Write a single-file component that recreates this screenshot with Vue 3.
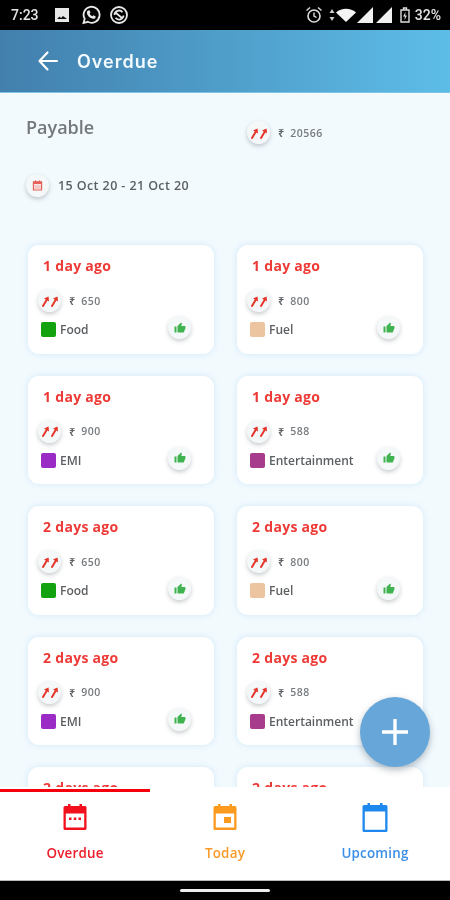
<script setup>
const cards = [
  { when: '1 day ago', amount: 650, label: 'Food', color: '#12a10f' },
  { when: '1 day ago', amount: 800, label: 'Fuel', color: '#ecc4a0' },
  { when: '1 day ago', amount: 900, label: 'EMI', color: '#9a2bc4' },
  { when: '1 day ago', amount: 588, label: 'Entertainment', color: '#a83c8c' },
  { when: '2 days ago', amount: 650, label: 'Food', color: '#12a10f' },
  { when: '2 days ago', amount: 800, label: 'Fuel', color: '#ecc4a0' },
  { when: '2 days ago', amount: 900, label: 'EMI', color: '#9a2bc4' },
  { when: '2 days ago', amount: 588, label: 'Entertainment', color: '#a83c8c' },
  { when: '2 days ago', amount: 650, label: 'Food', color: '#12a10f' },
  { when: '2 days ago', amount: 800, label: 'Fuel', color: '#ecc4a0' }
]
</script>

<template>
  <div class="phone">
    <div class="status">
      <div class="status-left">
        <span class="time">7:23</span>
        <svg class="st-img" viewBox="0 0 16 16"><path fill="#e8e8e8" d="M1 1h14v14H1z"/><path fill="#111" d="M3 12l2.500-2.500L7 11l2-2 4 3z"/></svg>
        <svg class="st-wa" viewBox="0 0 20 20"><path fill="none" stroke="#e8e8e8" stroke-width="1.800" d="M2.500 18l1.200-4.200A8 8 0 1 1 6.800 16.800z"/><path fill="#e8e8e8" d="M7 5.500l1.500-.3 1 2.400-.9 1.100c.6 1.100 1.500 2 2.700 2.600l1.100-1 2.300 1.100-.3 1.600c-.5.700-1.500 1-2.500.8-3.300-.8-5.500-3-6-5.800C5.800 6.900 6.200 6 7 5.500z"/></svg>
        <svg class="st-sw" viewBox="0 0 20 20"><circle cx="10" cy="10" r="8" fill="none" stroke="#e8e8e8" stroke-width="1.800"/><path fill="none" stroke="#e8e8e8" stroke-width="1.800" d="M5.500 10a4.500 4.500 0 0 1 8-2.800M14.500 10.500a4.500 4.500 0 0 1-8 2.300M7 8l6 5"/></svg>
      </div>
      <div class="status-right">
        <svg class="st-alarm" viewBox="0 0 18 18"><circle cx="9" cy="10" r="6" fill="none" stroke="#ddd" stroke-width="1.600"/><path fill="none" stroke="#ddd" stroke-width="1.400" d="M9 6.500V10l2.500 1.500M1.500 4.500L5 1.500M16.500 4.500L13 1.500"/></svg>
        <svg class="st-data" viewBox="0 0 6 14"><path fill="#ccc" d="M3 1l2.500 4h-5zM3 13L.5 9h5z"/></svg>
        <svg class="st-wifi" viewBox="0 0 20 14"><path fill="#f4f4f4" d="M0 4.500C5.500-.5 14.500-.5 20 4.500L10 14z"/></svg>
        <svg class="st-sig" viewBox="0 0 16 16"><path fill="#f0f0f0" d="M16 0v16H0z"/></svg>
        <svg class="st-sig" viewBox="0 0 16 16"><path fill="#f0f0f0" d="M16 0v16H0z"/></svg>
        <svg class="st-bat" viewBox="0 0 10 16"><path fill="none" stroke="#ddd" stroke-width="1.400" d="M1 3h8v12H1zM3.500 3V1h3v2"/><path fill="#ddd" d="M5.500 5L3 9.500h1.800L4.500 13 7 8.500H5.200z"/></svg>
        <span class="pct">32%</span>
      </div>
    </div>

    <header class="bar">
      <svg class="back" viewBox="0 0 22 22"><path fill="none" stroke="#fff" stroke-width="2.200" stroke-linecap="round" stroke-linejoin="round" d="M20 11H2.500M10.500 2.500L2.500 11l8 8.500"/></svg>
      <h1>Overdue</h1>
    </header>

    <main class="scroll">
      <section class="summary">
        <div class="payable">Payable</div>
        <div class="total">
          <span class="bubble">
            <svg viewBox="0 0 18 12" class="arrows"><path d="M2 11L6.500 3.500M11 11L15.500 3.500" stroke="#e5362c" stroke-width="2" fill="none" stroke-linecap="round"/><path d="M3 3.500L7.500 1.500 8 6.500zM12 3.500L16.500 1.500 17 6.500z" fill="#e5362c"/></svg>
          </span>
          <span class="rupee">₹</span><span class="total-num">20566</span>
        </div>
        <div class="dates">
          <span class="bubble">
            <svg viewBox="0 0 16 16" class="cal-small"><path fill="none" stroke="#e8605a" stroke-width="1.500" d="M3 3.500h10v10H3z"/><path fill="#e8605a" d="M3 3h10v3H3zM5 1.500h1V4H5zM10 1.500h1V4h-1z"/><path fill="#f6c9c6" d="M4 7h8v6H4z"/></svg>
          </span>
          <span class="date-text">15 Oct 20 - 21 Oct 20</span>
        </div>
      </section>

      <section class="grid">
        <article v-for="(c, i) in cards" :key="i" class="card">
          <div class="when">{{ c.when }}</div>
          <div class="amount">
            <span class="bubble">
              <svg viewBox="0 0 18 12" class="arrows"><path d="M2 11L6.500 3.500M11 11L15.500 3.500" stroke="#e5362c" stroke-width="2" fill="none" stroke-linecap="round"/><path d="M3 3.500L7.500 1.500 8 6.500zM12 3.500L16.500 1.500 17 6.500z" fill="#e5362c"/></svg>
            </span>
            <span class="rupee">₹</span><span class="num">{{ c.amount }}</span>
          </div>
          <div class="foot">
            <span class="swatch" :style="{ background: c.color }"></span>
            <span class="label">{{ c.label }}</span>
            <span class="bubble thumb">
              <svg viewBox="0 0 24 24"><path fill="#3fb34f" d="M1 21h4V9H1v12zm22-11c0-1.100-.9-2-2-2h-6.310l.95-4.570.03-.32c0-.41-.17-.79-.44-1.060L14.170 1 7.590 7.590C7.220 7.950 7 8.450 7 9v10c0 1.100.9 2 2 2h9c.83 0 1.540-.5 1.840-1.220l3.020-7.050c.09-.23.14-.47.14-.73v-2z"/></svg>
            </span>
          </div>
        </article>
      </section>
    </main>

    <button class="fab" aria-label="Add">
      <svg viewBox="0 0 28 28"><path stroke="#fff" stroke-width="3.400" d="M14 1v26M1 14h26"/></svg>
    </button>

    <nav class="tabs">
      <span class="indicator"></span>
      <div class="tab red">
        <svg viewBox="0 0 24 27"><path fill="#f2101c" d="M5 0h2.500v3H5zM16.500 0H19v3h-2.500z"/><path fill="#f2101c" d="M2 2h20a1.500 1.500 0 0 1 1.500 1.500v21A1.500 1.500 0 0 1 22 26H2a1.500 1.500 0 0 1-1.500-1.500v-21A1.500 1.500 0 0 1 2 2zm.8 7.500v14h18.400v-14z"/><path fill="#f2101c" d="M6 13.500h2.500V16H6zM10.800 13.500h2.500V16h-2.500zM15.500 13.500H18V16h-2.500z"/></svg>
        <span>Overdue</span>
      </div>
      <div class="tab orange">
        <svg viewBox="0 0 24 27"><path fill="#fb9a1e" d="M5 0h2.500v3H5zM16.500 0H19v3h-2.500z"/><path fill="#fb9a1e" d="M2 2h20a1.500 1.500 0 0 1 1.500 1.500v21A1.500 1.500 0 0 1 22 26H2a1.500 1.500 0 0 1-1.500-1.500v-21A1.500 1.500 0 0 1 2 2zm.8 7.500v14h18.400v-14z"/><path fill="#fb9a1e" d="M11 13h7v6h-7z"/></svg>
        <span>Today</span>
      </div>
      <div class="tab blue">
        <svg class="wide" viewBox="0 0 26 29"><path fill="#1e88ee" d="M5.500 0H8v3H5.500zM18 0h2.500v3H18z"/><path fill="#1e88ee" d="M2 2h22a1.500 1.500 0 0 1 1.500 1.500v24A1.500 1.500 0 0 1 24 29H2a1.500 1.500 0 0 1-1.500-1.500v-24A1.500 1.500 0 0 1 2 2zm.8 6.500v18.200h20.400V8.500z"/></svg>
        <span>Upcoming</span>
      </div>
    </nav>

    <footer class="sysbar"><span class="home"></span></footer>
  </div>
</template>

<style>
html, body { margin: 0; padding: 0; background: #000; }
</style>

<style scoped>
* { box-sizing: border-box; }
.phone {
  position: relative;
  width: 450px;
  height: 900px;
  display: flex;
  flex-direction: column;
  overflow: hidden;
  background: #f2fafe;
  font-family: "Open Sans", sans-serif;
  filter: blur(.4px);
}
.status {
  flex: 0 0 30px;
  background: #000;
  display: flex;
  align-items: center;
  justify-content: space-between;
  padding: 0 9px 0 11px;
  color: #e4e4e4;
  font-family: "Roboto", sans-serif;
  font-size: 14px;
  font-weight: 500;
}
.status-left, .status-right { display: flex; align-items: center; }
.time { margin-right: 15px; }
.st-img { width: 16px; height: 16px; margin-right: 11px; }
.st-wa { width: 20px; height: 20px; margin-right: 8px; }
.st-sw { width: 20px; height: 20px; }
.st-alarm { width: 18px; height: 18px; margin-right: 6px; }
.st-data { width: 6px; height: 14px; margin-right: 1px; }
.st-wifi { width: 20px; height: 14px; margin-right: 1px; }
.st-sig { width: 16px; height: 16px; margin-right: 3px; }
.st-bat { width: 10px; height: 16px; margin: 0 5px 0 5px; }
.pct { font-size: 14px; }

.bar {
  flex: 0 0 63px;
  display: flex;
  align-items: center;
  padding-left: 37px;
  background: linear-gradient(90deg, #427fad 0%, #5dbde7 100%);
  border-bottom: 1px solid #7fc4e2;
}
.back { width: 22px; height: 22px; margin-right: 18px; }
.bar h1 {
  margin: 0;
  color: #f4fbff;
  font-family: "Inter", sans-serif;
  font-size: 18px;
  font-weight: 600;
  letter-spacing: 1px;
}

.scroll { flex: 1; min-height: 0; overflow: hidden; }

.summary {
  display: grid;
  grid-template-columns: 221px 1fr;
  grid-template-rows: 40px 41px;
  padding: 23px 0 0 26px;
  height: 152px;
}
.payable {
  color: #74787b;
  font-size: 18px;
  font-weight: 600;
  line-height: 22px;
}
.total { display: flex; align-items: center; align-self: start; margin-top: 5px; }
.dates { grid-column: 1 / -1; display: flex; align-items: center; align-self: end; }
.date-text {
  margin-left: 9px;
  font-size: 12.500px;
  font-weight: 600;
  letter-spacing: .4px;
  color: #5c6064;
}
.bubble {
  flex: none;
  width: 23px;
  height: 23px;
  border-radius: 50%;
  background: #f4f8f9;
  box-shadow: 0 2px 4px rgba(60, 70, 80, .28);
  display: flex;
  align-items: center;
  justify-content: center;
}
.arrows { width: 18px; height: 12px; }
.cal-small { width: 13px; height: 13px; }
.rupee {
  margin-left: 8px;
  color: #5f6367;
  font-family: "Noto Sans", "Open Sans", sans-serif;
  font-size: 11px;
  font-weight: 600;
}
.total-num, .num {
  margin-left: 6px;
  font-size: 10.500px;
  font-weight: 600;
  letter-spacing: .5px;
  color: #777b7f;
}

.grid {
  display: grid;
  grid-template-columns: 186px 186px;
  column-gap: 23px;
  row-gap: 22px;
  padding-left: 28px;
}
.card {
  height: 108.500px;
  background: #fff;
  border-radius: 11px;
  box-shadow: 0 0 6px rgba(170, 210, 240, .45);
  padding: 12px 0 0 10px;
}
.when {
  padding-left: 5px;
  color: #ee3a36;
  font-size: 14px;
  font-weight: 700;
  letter-spacing: .3px;
  line-height: 18px;
}
.amount { display: flex; align-items: center; margin-top: 14px; }
.foot { display: flex; align-items: center; margin-top: 8px; padding-left: 3px; padding-right: 23px; }
.swatch { width: 15px; height: 15px; border-radius: 2px; margin-right: 4px; }
.label {
  flex: 1;
  color: #5c5f62;
  font-size: 12px;
  font-weight: 600;
}
.thumb { margin-top: -4px; }
.thumb svg { width: 12px; height: 12px; }

.fab {
  position: absolute;
  left: 360px;
  top: 697px;
  width: 70px;
  height: 70px;
  border: none;
  padding: 0;
  border-radius: 50%;
  background: #66a6d8;
  box-shadow: 0 3px 7px rgba(40, 60, 80, .35);
  display: flex;
  align-items: center;
  justify-content: center;
  z-index: 3;
}
.fab svg { width: 28px; height: 28px; }

.tabs {
  position: relative;
  flex: 0 0 94px;
  display: grid;
  grid-template-columns: 150px 150px 150px;
  background: #fff;
  border-bottom: 1px solid #bbb;
  z-index: 2;
}
.indicator {
  position: absolute;
  left: 0;
  top: 2px;
  width: 150px;
  height: 3px;
  background: #f5000c;
}
.tab {
  display: flex;
  flex-direction: column;
  align-items: center;
  padding-top: 17px;
  font-family: "Open Sans", sans-serif;
  font-size: 13.400px;
  font-weight: 600;
  letter-spacing: .2px;
}
.tab svg { width: 24px; height: 27px; display: block; margin-bottom: 13px; }
.tab svg.wide { width: 26px; height: 29px; margin-top: -1px; margin-bottom: 12px; }
.tab span { line-height: 18px; }
.red { color: #ee1c2a; }
.orange { color: #fa9a2a; }
.blue { color: #3b8fe8; }

.sysbar {
  flex: 0 0 19px;
  background: #000;
  display: flex;
  justify-content: center;
  align-items: center;
}
.home { width: 90px; height: 3px; border-radius: 2px; background: #eee; }
</style>
